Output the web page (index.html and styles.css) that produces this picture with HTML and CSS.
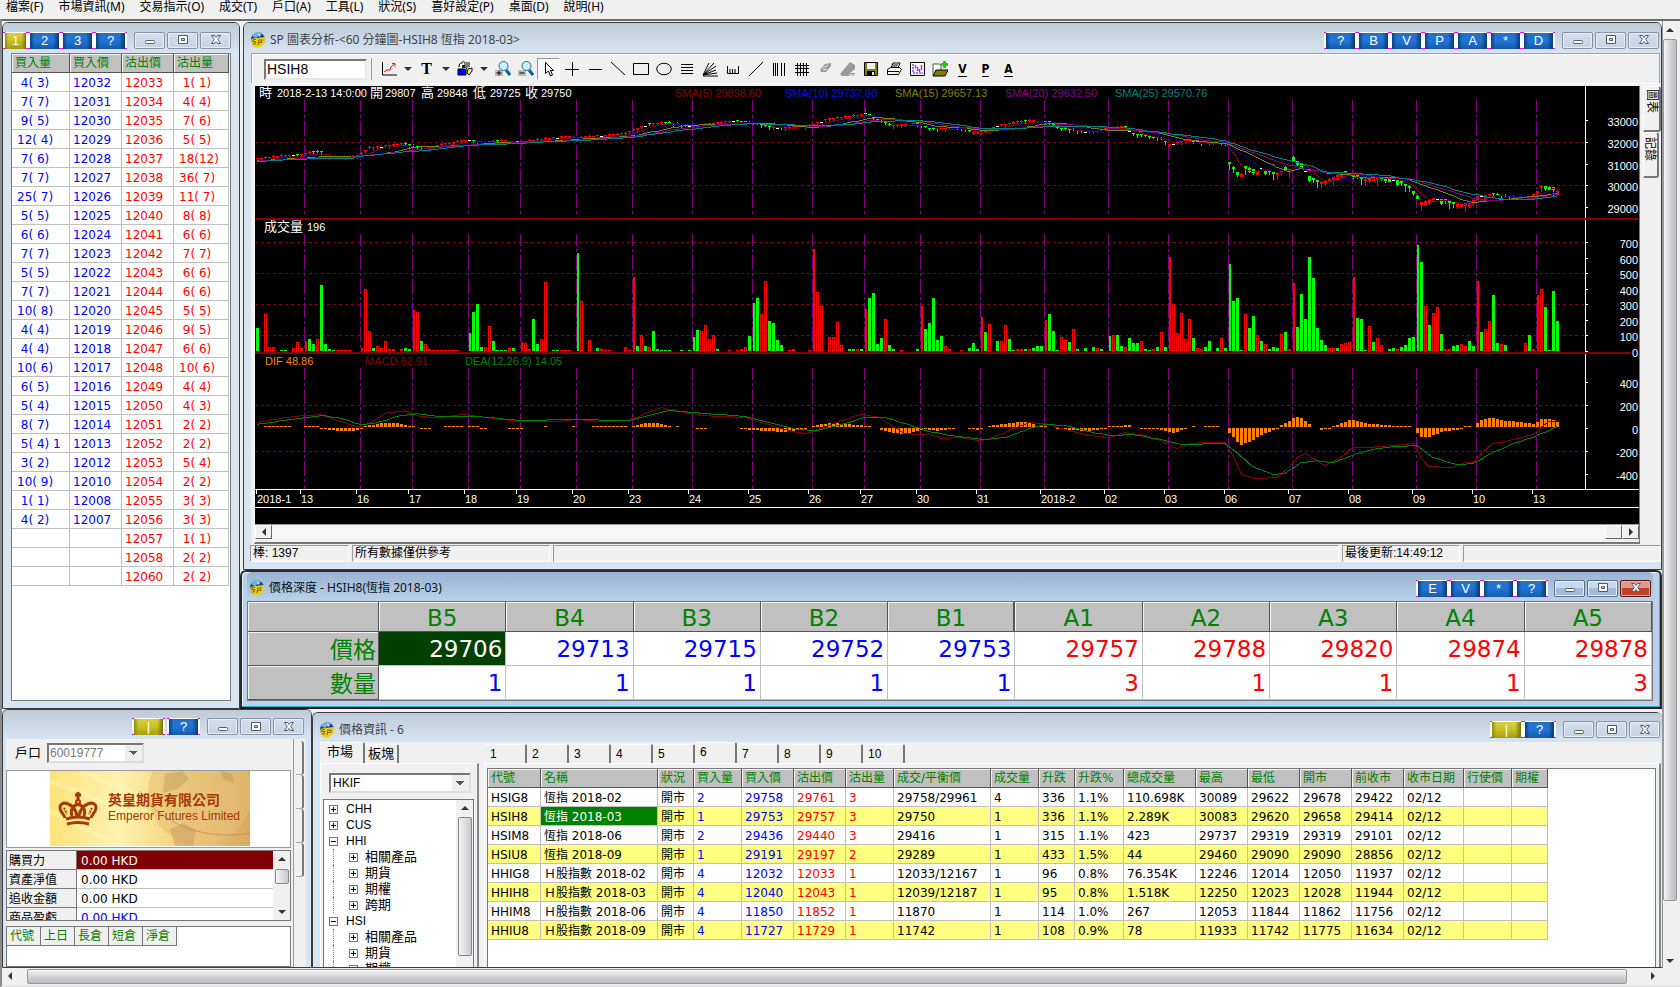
FILE: index.html
```html
<!DOCTYPE html>
<html lang="zh-Hant">
<head>
<meta charset="utf-8">
<title>SP Trader</title>
<link rel="stylesheet" href="styles.css">
</head>
<body>
<svg class="sprite" aria-hidden="true">
  <symbol id="i-sp" viewBox="0 0 16 16"><circle cx="8" cy="7.500" r="7" fill="#17479b"/><path d="M2 4a7 7 0 0 1 10-3L6 6z" fill="#6fb0dc"/><path d="M8 1l3 2-2 2z" fill="#d8ecf8"/><path d="M1 9c0-2 2-3 6-3l8-1c1 3 0 6-2 8-3 3-7 3-9 2z" fill="#e8cf1a"/><path d="M6 7.500H3.500L3 9.500h2.500L5 12H2.500M8 13l1-5h3l-.5 2.500H9" fill="none" stroke="#8a6d00" stroke-width="1.200"/></symbol>
  <symbol id="c-min" viewBox="0 0 14 14"><rect x="2.500" y="7.500" width="9" height="3" rx="1" fill="#fff" stroke="#555a66"/></symbol>
  <symbol id="c-max" viewBox="0 0 14 14"><path d="M2.500 2.500h9v8h-9zM5.500 5.500h3v2h-3z" fill="#fff" fill-rule="evenodd" stroke="#555a66"/></symbol>
  <symbol id="c-x" viewBox="0 0 14 14"><path d="M2.500 2.500h3L7 4.500l1.500-2h3L8.700 6.500l2.800 4h-3L7 8.500l-1.500 2h-3l2.800-4z" fill="#fff" stroke="#555a66"/></symbol>
  <symbol id="t-chart" viewBox="0 0 16 16"><path d="M1.500 1v13H16" fill="none" stroke="#000"/><path d="M3 11l3-2h3l1-3 3-3M11 2.500h3v3" fill="none" stroke="#f00"/></symbol>
  <symbol id="t-tools" viewBox="0 0 16 16"><path d="M1 8h8v6H1z" fill="#00f" stroke="#000"/><path d="M2 6c0-3 1-4 3-4 0-2 3-2 3 0v5M10 1v6l-2 2M12 1v5M11 8l4-1v3l-3 4-2-2z" fill="#fff" stroke="#000"/><path d="M5 4h3v3H5z" fill="#222"/><path d="M11 9h2v3h-2z" fill="#ee0"/></symbol>
  <symbol id="t-zin" viewBox="0 0 16 16"><path d="M0 9h8v6H0z" fill="#bbb"/><path d="M1.500 12h5M4 9.500v5" stroke="#000"/><path d="M11 9l4 5" stroke="#069" stroke-width="3"/><circle cx="8.500" cy="5" r="4.500" fill="#cdeefc" stroke="#1d6e9c"/></symbol>
  <symbol id="t-zout" viewBox="0 0 16 16"><path d="M0 9h8v6H0z" fill="#bbb"/><path d="M1.500 12h5" stroke="#000"/><path d="M11 9l4 5" stroke="#069" stroke-width="3"/><circle cx="8.500" cy="5" r="4.500" fill="#cdeefc" stroke="#1d6e9c"/></symbol>
  <symbol id="t-arrow" viewBox="0 0 16 16"><path d="M4.500 1.500v11l3-2.500 2 5 2-1-2-4.500h3z" fill="#fff" stroke="#000"/></symbol>
  <symbol id="t-plus" viewBox="0 0 16 16"><path d="M1 8.500h14M8.500 1v14" stroke="#000"/></symbol>
  <symbol id="t-minus" viewBox="0 0 16 16"><path d="M2 8.500h13" stroke="#000"/></symbol>
  <symbol id="t-back" viewBox="0 0 16 16"><path d="M1 1l14 13" stroke="#000"/></symbol>
  <symbol id="t-rect" viewBox="0 0 16 16"><path d="M.500 2.500h15v11H.500z" fill="none" stroke="#000"/></symbol>
  <symbol id="t-oval" viewBox="0 0 16 16"><ellipse cx="8" cy="8" rx="7.300" ry="5.800" fill="none" stroke="#000"/></symbol>
  <symbol id="t-lines" viewBox="0 0 16 16"><path d="M2 3.500h12M2 6.500h12M2 9.500h12M2 12.500h12" stroke="#000"/></symbol>
  <symbol id="t-fan" viewBox="0 0 16 16"><path d="M1 15h15M1 14L7 2M1 14L12 2M1 14l13-9M1 14l13-5M1 14l14-2" fill="none" stroke="#000"/></symbol>
  <symbol id="t-comb" viewBox="0 0 16 16"><path d="M2.500 5v7.500h11V5M5 8v4M7.500 8v4M10 8v4" fill="none" stroke="#000"/></symbol>
  <symbol id="t-slash" viewBox="0 0 16 16"><path d="M1 15L15 1" stroke="#000"/></symbol>
  <symbol id="t-vert" viewBox="0 0 16 16"><path d="M2.500 2v13M4.500 2v13M6.500 2v13M10.500 2v13M13.500 2v13" stroke="#000"/></symbol>
  <symbol id="t-grid" viewBox="0 0 16 16"><path d="M3.500 2v13M6.500 2v13M9.500 2v13M12.500 2v13M1 4.500h14M1 7.500h14M1 11.500h14" stroke="#000"/></symbol>
  <symbol id="t-er1" viewBox="0 0 16 16"><path d="M3 9l5-6 6-1v3L9 11H4z" fill="#999"/><path d="M6 7l5-3M6 9l4-1" stroke="#eee"/></symbol>
  <symbol id="t-er2" viewBox="0 0 16 16"><path d="M0 13l10-12 5 3v4l-5 4h5v3H2z" fill="#999"/><path d="M9 14h7" stroke="#fff"/></symbol>
  <symbol id="t-save" viewBox="0 0 16 16"><path d="M1.500 1.500h13v13h-13z" fill="#808000" stroke="#000"/><path d="M4 2h8v6H4z" fill="#f0f0f0"/><path d="M4 10h8v5H4z" fill="#000"/><path d="M9 11h2v3H9z" fill="#f0f0f0"/></symbol>
  <symbol id="t-print" viewBox="0 0 16 16"><path d="M5 7l2-5h7l-2 5M1.500 8.500l3-2h9l2 2-3 5h-11z" fill="#fff" stroke="#000"/><path d="M2 10.500h11M7 4h5M6 6h5" stroke="#000"/><path d="M9 12h3" stroke="#dd0"/></symbol>
  <symbol id="t-ind" viewBox="0 0 16 16"><path d="M1.500 1.500h14v13h-14z" fill="#fff" stroke="#000"/><path d="M4 3v9h10" fill="none" stroke="#00f" stroke-dasharray="2 1"/><path d="M6.500 4v3M8.500 6v4M10.500 8v3M12.500 4v5" stroke="#f0f" stroke-width="1.500"/></symbol>
  <symbol id="t-open" viewBox="0 0 16 16"><path d="M1 5V3h7l1 2v9H1z" fill="#fff" stroke="#555"/><path d="M1 15l3-6h12l-3 6z" fill="#808000" stroke="#000"/><path d="M12.500 0v7M9 3.500h7" stroke="#0d0" stroke-width="3"/></symbol>
</svg>

<nav class="menubar">
  <a href="#">檔案(F)</a><a href="#">市場資訊(M)</a><a href="#">交易指示(O)</a><a href="#">成交(T)</a><a href="#">戶口(A)</a><a href="#">工具(L)</a><a href="#">狀況(S)</a><a href="#">喜好設定(P)</a><a href="#">桌面(D)</a><a href="#">說明(H)</a>
</nav>

<div class="workspace">
  <main class="desk">
    <div class="row-top">
      <section class="win win-book">
        <header class="title" data-badges="1y 2 3 ?"></header>
        <div class="sheet book-sheet">
          <table class="grid book">
            <thead><tr><th>買入量</th><th>買入價</th><th>沽出價</th><th>沽出量</th></tr></thead>
            <tbody id="book"></tbody>
          </table>
        </div>
      </section>

      <div class="column">
        <section class="win win-chart">
          <header class="title" data-badges="? B V P A * D"><svg class="logo"><use href="#i-sp"/></svg><h2>SP 圖表分析-&lt;60 分鐘圖-HSIH8 恆指 2018-03&gt;</h2></header>
          <div class="toolbar"><input class="symbol" aria-label="Symbol" value="HSIH8"><div class="tools" id="tools"></div></div>
          <div class="chart-row">
            <div class="chart-frame">
              <svg id="chart" class="chart" viewBox="0 0 1384 438"></svg>
              <div class="classic-scroll"><button type="button" aria-label="left"><i class="left"></i></button><span class="track"></span><span class="thumb"></span><button type="button" aria-label="right"><i class="right"></i></button></div>
            </div>
            <div class="side-tabs"><button type="button" class="on">圖表</button><button type="button">記錄</button></div>
          </div>
          <footer class="status"><span class="s1">棒: 1397</span><span class="s2">所有數據僅供參考</span><span class="s3"></span><span class="s4">最後更新:14:49:12</span><span class="s5"></span></footer>
        </section>

        <section class="win win-depth active">
          <header class="title" data-badges="E V * ?"><svg class="logo"><use href="#i-sp"/></svg><h2>價格深度 - HSIH8(恆指 2018-03)</h2></header>
          <table class="depth">
            <thead><tr><th></th><th>B5</th><th>B4</th><th>B3</th><th>B2</th><th class="mid">B1</th><th>A1</th><th>A2</th><th>A3</th><th>A4</th><th>A5</th></tr></thead>
            <tbody>
              <tr><th>價格</th><td class="pick">29706</td><td>29713</td><td>29715</td><td>29752</td><td>29753</td><td class="ask">29757</td><td class="ask">29788</td><td class="ask">29820</td><td class="ask">29874</td><td class="ask">29878</td></tr>
              <tr><th>數量</th><td>1</td><td>1</td><td>1</td><td>1</td><td>1</td><td class="ask">3</td><td class="ask">1</td><td class="ask">1</td><td class="ask">1</td><td class="ask">3</td></tr>
            </tbody>
          </table>
        </section>
      </div>
    </div>

    <div class="row-bottom">
      <section class="win win-account">
        <header class="title" data-badges="|y ?"></header>
        <div class="account">
          <div class="account-main">
            <div class="field"><label for="acc">戶口</label><select id="acc" disabled><option>60019777</option></select></div>
            <div class="brand">
              <div class="banner">
                <svg class="banner-art" viewBox="0 0 200 75">
                  <defs><linearGradient id="g" x2="1"><stop offset="0" stop-color="#ffe27a"/><stop offset=".350" stop-color="#fff3b0"/><stop offset=".600" stop-color="#f5d880"/><stop offset="1" stop-color="#d8a860"/></linearGradient></defs>
                  <path d="M0 0h200v75H0z" fill="url(#g)"/>
                  <circle cx="150" cy="22" r="52" fill="#e6bf78" opacity=".550"/>
                  <path d="M115 3l18-3 6 8-12 10-14 4zM170 0l12 2 2 9-10-2zM120 58l14-6 12 8-3 15h-18z" fill="#c49a62" opacity=".500"/>
                  <path d="M90 20c20 35 70 50 110 42" fill="none" stroke="#c07850" opacity=".600"/>
                  <path d="M0 10l80 30M0 40l60 30M30 0l70 30" stroke="#fff6c0" stroke-width="5" opacity=".400"/>
                  <g fill="none" stroke="#a53a05" stroke-width="2"><path d="M28 21v8M25 24h6" stroke-width="3"/><circle cx="28" cy="31" r="2"/><path d="M27 45c-2-13-17-17-17-8 0 4 4 6 5 10M29 45c2-13 17-17 17-8 0 4-4 6-5 10M28 33c-6 2-8 7-6 12M28 33c6 2 8 7 6 12" stroke-width="3"/><path d="M14 37l3 6M42 37l-3 6" stroke-dasharray="2 1"/><path d="M16 48q12-4 24 0M17 53q11-3 22 0" stroke-width="3"/></g>
                </svg>
                <p class="brand-zh">英皇期貨有限公司</p><p class="brand-en">Emperor Futures Limited</p>
              </div>
            </div>
            <div class="funds">
              <table class="fund"><tbody>
                <tr class="hot"><th>購買力</th><td>0.00 HKD</td></tr><tr><th>資產淨值</th><td>0.00 HKD</td></tr><tr><th>追收金額</th><td>0.00 HKD</td></tr><tr class="bl"><th>商品盈虧</th><td>0.00 HKD</td></tr>
              </tbody></table>
              <div class="vbar"><i class="up"></i><b class="short"></b><i class="down"></i></div>
            </div>
            <div class="positions"><table class="pos"><thead><tr><th>代號</th><th>上日</th><th>長倉</th><th>短倉</th><th>淨倉</th></tr></thead></table></div>
          </div>
          <div class="account-side"><i></i><i></i><i></i><i></i></div>
        </div>
      </section>

      <section class="win win-info">
        <header class="title" data-badges="|y ?"><svg class="logo"><use href="#i-sp"/></svg><h2>價格資訊 - 6</h2></header>
        <div class="info">
          <div class="market">
            <div class="tabs"><button type="button" class="on">市場</button><button type="button">板塊</button></div>
            <div class="pane">
              <select class="market-select" aria-label="市場"><option>HKIF</option></select>
              <div class="tree-box"><ul class="tree" id="tree"></ul><div class="vbar"><i class="up"></i><b class="long"></b></div></div>
            </div>
          </div>
          <div class="quotes">
            <div class="tabs num" id="pages"></div>
            <div class="pane"><div class="sheet quote-sheet"><table class="grid quote"><thead id="qh"></thead><tbody id="qb"></tbody></table></div></div>
          </div>
        </div>
      </section>
    </div>
  </main>
  <div class="vscroll"><i class="up"></i><b></b><i class="down"></i></div>
</div>
<div class="hscroll"><i class="left"></i><b></b><i class="right"></i></div>
<script src="app.js"></script>
</body>
</html>
```
FILE: app.js
```js
const $ = (id) => document.getElementById(id);

/* Title bar buttons */
document.querySelectorAll('.title').forEach((bar) => {
  const badges = bar.dataset.badges.split(' ').map((b) => {
    const gold = b.endsWith('y');
    return `<button type="button" class="badge${gold ? ' gold' : ''}"><span>${gold ? b[0] : b}</span></button>`;
  }).join('');
  const ctrl = ['min', 'max', 'x'].map((c) =>
    `<button type="button" class="ctrl ctrl-${c}" aria-label="${c}"><svg><use href="#c-${c}"/></svg></button>`).join('');
  bar.insertAdjacentHTML('beforeend', `<div class="badges">${badges}</div><div class="ctrls">${ctrl}</div>`);
});

/* Chart toolbar */
const tools = ['chart', 'v', '=T', 'v', 'tools', 'v', 'zin', 'zout', 'arrow', 'plus', 'minus', 'back', 'rect', 'oval', 'lines', 'fan',
  'comb', 'slash', 'vert', 'grid', 'er1', 'er2', 'save', 'print', 'ind', 'open', '_V', '_P', '_A'];
$('tools').innerHTML = tools.map((t) => {
  if (t === 'v') return '<button type="button" class="drop" aria-label="more"><i class="down"></i></button>';
  if (t[0] === '=') return `<button type="button" class="tool serif">${t[1]}</button>`;
  if (t[0] === '_') return `<button type="button" class="tool under"><span>${t[1]}</span></button>`;
  return `<button type="button" class="tool${t === 'arrow' ? ' pressed' : ''}" aria-label="${t}"><svg><use href="#t-${t}"/></svg></button>`;
}).join('');

/* Order book */
const bids = [[4, 3], [7, 7], [9, 5], [12, 4], [7, 6], [7, 7], [25, 7], [5, 5], [6, 6], [7, 7], [5, 5], [7, 7], [10, 8], [4, 4], [4, 4], [10, 6],
  [6, 5], [5, 4], [8, 7], [5, 4, ' 1'], [3, 2], [10, 9], [1, 1], [4, 2]];
const bidPrices = [12032, 12031, 12030, 12029, 12028, 12027, 12026, 12025, 12024, 12023, 12022, 12021, 12020, 12019, 12018, 12017,
  12016, 12015, 12014, 12013, 12012, 12010, 12008, 12007];
const asks = [[1, 1], [4, 4], [7, 6], [5, 5], [18, 12], [36, 7], [11, 7], [8, 8], [6, 6], [7, 7], [6, 6], [6, 6], [5, 5], [9, 5], [6, 6], [10, 6],
  [4, 4], [4, 3], [2, 2], [2, 2], [5, 4], [2, 2], [3, 3], [3, 3], [1, 1], [2, 2], [2, 2]];
const pad = (n) => (n < 10 ? ' ' : '') + n;
const lot = (q) => (q ? `${pad(q[0])}(${pad(q[1])})${q[2] || ''}` : '');
$('book').innerHTML = asks.map((a, i) => {
  const price = i < 26 ? 12033 + i : 12060;
  return `<tr><td class="bid">${lot(bids[i])}</td><td class="bid">${bidPrices[i] || ''}</td><td class="ask">${price}</td><td class="ask">${lot(a)}</td></tr>`;
}).join('');

/* Quotes */
const cols = ['代號', '名稱', '狀況', '買入量', '買入價', '沽出價', '沽出量', '成交/平衡價', '成交量', '升跌', '升跌%', '總成交量', '最高', '最低', '開市', '前收市', '收市日期', '行使價', '期權'];
const quotes = [
  'HSIG8|恆指 2018-02|開市|2|29758|29761|3|29758/29961|4|336|1.1%|110.698K|30089|29622|29678|29422',
  'HSIH8|恆指 2018-03|開市|1|29753|29757|3|29750|1|336|1.1%|2.289K|30083|29620|29658|29414',
  'HSIM8|恆指 2018-06|開市|2|29436|29440|3|29416|1|315|1.1%|423|29737|29319|29319|29101',
  'HSIU8|恆指 2018-09|開市|1|29191|29197|2|29289|1|433|1.5%|44|29460|29090|29090|28856',
  'HHIG8|Ｈ股指數 2018-02|開市|4|12032|12033|1|12033/12167|1|96|0.8%|76.354K|12246|12014|12050|11937',
  'HHIH8|Ｈ股指數 2018-03|開市|4|12040|12043|1|12039/12187|1|95|0.8%|1.518K|12250|12023|12028|11944',
  'HHIM8|Ｈ股指數 2018-06|開市|4|11850|11852|1|11870|1|114|1.0%|267|12053|11844|11862|11756',
  'HHIU8|Ｈ股指數 2018-09|開市|4|11727|11729|1|11742|1|108|0.9%|78|11933|11742|11775|11634'];
$('qh').innerHTML = `<tr>${cols.map((c) => `<th>${c}</th>`).join('')}</tr>`;
$('qb').innerHTML = quotes.map((q, r) => {
  const cells = [...q.split('|'), '02/12', '', ''];
  return `<tr>${cells.map((c, i) => {
    const k = i === 3 || i === 4 ? 'bid' : i === 5 || i === 6 ? 'ask' : r === 1 && i === 1 ? 'sel' : '';
    return `<td class="${k}">${c}</td>`;
  }).join('')}</tr>`;
}).join('');
$('pages').innerHTML = [1, 2, 3, 4, 5, 6, 7, 8, 9, 10].map((n) => `<button type="button"${n === 6 ? ' class="on"' : ''}>${n}</button>`).join('');

/* Market tree */
const tree = [['+', 'CHH'], ['+', 'CUS'], ['-', 'HHI'], ['+', '相關產品', 1], ['+', '期貨', 1], ['+', '期權', 1], ['+', '跨期', 1], ['-', 'HSI'], ['+', '相關產品', 1], ['+', '期貨', 1], ['+', '期權', 1]];
$('tree').innerHTML = tree.map(([s, t, d]) => `<li class="${d ? 'child' : ''}"><i class="box ${s === '+' ? 'plus' : ''}"></i><span>${t}</span></li>`).join('');

/* Chart: three panels on a shared 4px bar pitch */
const starts = [12, 26, 39, 53, 66, 80, 94, 109, 124, 139, 152, 166, 181, 197, 213, 228, 243, 259, 274, 290, 305, 320];
const days = ['13', '16', '17', '18', '19', '20', '23', '24', '25', '26', '27', '30', '31', '2018-2', '02', '03', '06', '07', '08', '09', '10', '13'];
const out = [];
const line = (x1, y1, x2, y2, c, dash = '', w = 1) => out.push(`<path d="M${x1} ${y1}L${x2} ${y2}" stroke="${c}" stroke-width="${w}"${dash ? ` stroke-dasharray="${dash}"` : ''}/>`);
const rect = (x, y, w, h, c) => out.push(`<rect x="${x}" y="${y}" width="${w}" height="${h}" fill="${c}"/>`);
const text = (x, y, t, c = '#fff', a = 'start') => out.push(`<text x="${x}" y="${y}" fill="${c}" text-anchor="${a}"${/[\u4e00-\u9fff]/.test(t) ? ' class="zh"' : ''}>${t}</text>`);
const frames = (pts) => {
  const v = [];
  for (let k = 0; k < pts.length - 2; k += 2) {
    const [a, ya, b, yb] = pts.slice(k, k + 4);
    for (let i = a; i <= b; i++) v[i] = ya + (yb - ya) * (i - a) / (b - a || 1);
  }
  return v;
};
const poly = (v, c) => out.push(`<polyline fill="none" stroke="${c}" points="${v.map((y, i) => `${4 * i + 2},${Math.round(y) + 0.5}`).join(' ')}"/>`);

[56, 99, 156, 187, 218, 249, 319, 365].forEach((y) => line(0, y + 0.5, 1330, y + 0.5, '#800000', '3 3'));
starts.forEach((i) => [[14, 131], [148, 265], [282, 403]].forEach(([a, b]) => line(4 * i + 1.5, a, 4 * i + 1.5, b, '#800080', '12 3 3 3 3 0')));

/* Price */
const price = frames([0, 73, 6, 70, 11, 69, 14, 66, 16, 66, 17, 71, 25, 71, 26, 68, 28, 62, 32, 60, 37, 58, 39, 60, 43, 62, 46, 59, 53, 54, 56, 57, 60, 55, 66, 56,
  72, 53, 77, 51, 80, 52, 86, 50, 92, 48, 94, 44, 98, 38, 103, 37, 107, 39, 109, 40, 115, 37, 120, 35, 124, 37, 129, 42, 137, 41, 139, 39, 142, 34, 147, 31,
  150, 30, 152, 27, 155, 34, 159, 40, 165, 38, 168, 43, 176, 42, 179, 47, 182, 46, 185, 40, 192, 35, 198, 36, 200, 42, 208, 46, 214, 42, 217, 41, 219, 48,
  226, 53, 228, 59, 232, 55, 237, 57, 242, 57, 243, 77, 245, 87, 246, 89, 247, 81, 250, 86, 251, 82, 255, 88, 257, 82, 258, 84, 259, 72, 261, 79, 263, 91,
  266, 97, 269, 92, 272, 86, 275, 89, 277, 94, 281, 91, 286, 96, 288, 101, 290, 111, 291, 117, 294, 113, 297, 114, 300, 119, 303, 118, 305, 111, 309, 108,
  313, 111, 318, 111, 320, 106, 321, 101, 324, 102, 325, 106]);
price.forEach((y, i) => {
  const late = i > 242 && (i < 308 || i > 319);
  const h = (i * 37) % 11;
  const next = price[Math.min(i + 1, 325)];
  const c = h === 3 ? '#fff' : (next - y > 0.4 || (next - y > -0.3 && h % 2)) ? '#0f0' : '#f00';
  const yy = Math.round(y);
  if (c === '#fff') { rect(4 * i + 1, yy, 3, 1, c); return; }
  const body = late ? 2 + h % 4 : 1;
  const wick = late ? 4 + h % 5 : 3;
  rect(4 * i + 2, yy - (h % 3), 1, wick, c);
  rect(4 * i + 1, yy - 1, 3, body, c);
});
rect(4 * 152 + 2, 22, 1, 7, '#f00');
const sma = (n) => price.map((_, i) => {
  const s = price.slice(Math.max(0, i - n + 1), i + 1);
  return s.reduce((a, b) => a + b, 0) / s.length + (i < 25 ? n / 12 : 0);
});
[[5, '#800000'], [10, '#000080'], [15, '#808000'], [20, '#800080'], [25, '#008080']].forEach(([n, c]) => poly(sma(n), c));

/* Volume: bar index, colour, top edge in thirds of a pixel */
const vol = `0g357 2r313 3r412 4r412 6g423 7g423 9r415 10r397 11r415 12r394 13g388 14g403 15r388 16g228 17g403 18g420 19g423 20r423 21r423 22r423 23r423
26r415 27r238 28r364 29g415 30r409 31r415 32r394 33r418 34r420 36r418 37g415 38g420 39r301 40r307 41g394 42r403 43r420 44r421 45r421 46r423 47r423 48r423 49r423 50r421
53g370 54g307 55g283 56g412 57r412 58r349 59g394 60g423 61g423 62g423 63r415 64g415 66r397 67r400 68r420 69g328 70g403 71r388 72r217 74g423 75g423 76r423 77r423 78r423
80g132 81r274 83r391 85g415 86r420 87r423 88r423 92r412 93r423 94r202 95g409 96r376 97g409 98r412 99g364 100g418 101g423 102g423 103g423 106g423 108g423
109g382 110g361 111r364 112r346 113r388 114r376 115g420 118r423 120r423 121r418 122r412 123g379 124g280 125g265 126r313 127r214 128g334 129g340 130g391 131g406 133r423 134r418 138r423
139r118 140r247 141r289 143r382 144r382 145r337 146r406 148g420 149g420 150r418 151g420 152r298 153g265 154g250 155g403 156g385 157r328 158g406 159g418 161r423 165g420
166r289 167g358 168g340 169g265 170g391 171g379 172r409 173r418 176r423 178g415 179g400 180g420 181r322 182g367 183r343 185g394 186r394 187r346 188g388 189g423 190r418 191r418 192g420 193r418 194g415 195g409 196g409
197r331 198g313 199g364 200g423 201r382 202r391 203g397 204r358 205g418 207g415 209g412 210r415 211g418 213g379 214r376 215g376 216g409 217r412 218g385 219g400 220g400 221r394 222g418 223g423 224r420 225g412 226r367 227g412
228r142 229r283 230r370 231r310 232r388 233r328 234g385 235r415 236r418 237g412 238g394 240g415 241r385 242g415 243g163 244g274 245g265 246g423 247r313 248g355 249g319 250r376 251g394 252r403 253g418 254g412 255g415 256r373 257g367 258r418
259r220 260g352 261g253 262g328 263g142 264g205 265g355 266g391 267g406 268r415 269r415 270g415 271r403 272r400 273r397 274r202 275g325 276g328 277g423 278r349 279g397 280r385 281r406 283g418 284g415 285r420 286g412 287g406 288g385 289g382
290g106 291g157 292r289 293g346 294r310 295r292 296g373 297r418 298r420 299g409 300g406 301r403 302r409 303g394 304g409 305r214 306g367 307r358 308r334 309g256 310g400 311r403 312g406 317r400 318g376 319r418 320r256 321r238 322g292 323g423 324g244 325g334`;
vol.split(/\s+/).forEach((s) => {
  const [, i, c, t] = s.match(/(\d+)([gr])(\d+)/);
  const h = Math.max(1, Math.round((425 - t) / 3));
  const x = 4 * i + 1;
  const first = starts.includes(+i);
  if (c === 'g') rect(first ? x + 1 : x, 265 - h, first ? 2 : 3, h, '#0f0');
  else if (h < 3) rect(x, 265 - h, 3, h, '#f00');
  else out.push(`<path d="M${x + (first ? 1.5 : 0.5)} 265V${265.5 - h}h${first ? 1 : 2}V264.500z" fill="${first ? 'none' : '#000'}" stroke="#f00"/>`);
});

/* MACD */
const hist = frames([2, 1, 8, 1, 9, 0, 11, 0, 12, 1, 15, 1, 16, -1, 18, -2, 20, -3, 24, -3, 26, -1, 27, 1, 29, 2, 31, 4, 34, 4, 36, 3, 38, 1, 40, 0, 41, -1, 43, -1, 44, 0,
  46, 0, 47, 1, 51, 1, 52, 0, 53, 1, 55, 1, 56, -1, 57, -1, 58, 0, 62, 0, 63, -1, 66, -1, 67, 0, 71, 0, 72, 1, 73, 0, 78, 0, 79, 1, 80, 0, 83, 0, 84, 1, 92, 1, 93, 0, 94, 1,
  96, 3, 98, 4, 100, 4, 101, 3, 103, 1, 104, 0, 105, 1, 106, 0, 109, 0, 110, -1, 112, -1, 113, 0, 120, 0, 121, -1, 123, -2, 127, -3, 131, -4, 134, -3, 137, -1, 138, 0, 139, 1,
  141, 3, 144, 4, 147, 3, 149, 2, 153, 1, 154, 0, 155, 0, 156, -2, 158, -4, 161, -6, 163, -5, 165, -3, 166, -2, 167, -1, 170, -3, 172, -2, 174, -1, 175, 0, 177, 0, 178, -1,
  180, -2, 181, -1, 183, 1, 185, 2, 188, 4, 191, 5, 193, 4, 195, 1, 197, 1, 198, 0, 199, 0, 200, -1, 203, -2, 208, -3, 212, -1, 213, 1, 215, 1, 218, 2, 219, 0, 220, 0, 221, -1,
  224, -1, 226, -2, 229, -5, 230, -4, 232, -1, 233, 0, 234, 1, 235, 0, 236, 0, 237, 1, 240, 1, 241, 0, 242, 0, 243, -5, 245, -14, 246, -17, 249, -12, 251, -7, 253, -4, 255, -1,
  256, 2, 258, 6, 259, 9, 260, 10, 261, 9, 262, 6, 263, 3, 264, 0, 265, 0, 266, -2, 268, -1, 269, 1, 270, 2, 272, 5, 273, 7, 274, 7, 276, 5, 278, 3, 282, 2, 284, 1, 288, 1,
  289, 0, 290, -5, 291, -9, 293, -9, 295, -6, 297, -3, 300, -2, 301, -1, 302, 1, 303, 1, 304, 0, 305, 4, 306, 7, 308, 9, 310, 8, 312, 6, 316, 5, 319, 3, 320, 5, 321, 8,
  323, 8, 324, 7, 325, 5]);
hist.forEach((v, i) => {
  const h = Math.round(v);
  if (h > 0) rect(4 * i + 1, 341 - h, 3, h, '#ff8000');
  if (h < 0) rect(4 * i + 1, 342, 3, -h, '#ff8000');
});
poly(frames([0, 336, 9, 330, 16, 328, 20, 334, 26, 341, 29, 335, 32, 327, 37, 324, 41, 330, 45, 331, 52, 328, 58, 331, 66, 335, 75, 335, 80, 333, 86, 335, 93, 334, 97, 327,
  101, 321, 105, 324, 111, 329, 122, 331, 127, 337, 133, 344, 137, 347, 141, 342, 146, 334, 151, 328, 155, 330, 158, 337, 162, 347, 166, 348, 168, 347, 171, 352, 176, 351,
  180, 354, 183, 353, 188, 344, 193, 336, 197, 337, 203, 344, 208, 349, 213, 351, 217, 346, 221, 348, 226, 354, 230, 362, 233, 357, 237, 356, 242, 356, 244, 369, 246, 387,
  249, 392, 255, 391, 258, 381, 260, 371, 262, 367, 265, 374, 267, 379, 271, 371, 274, 361, 278, 361, 284, 359, 289, 357, 291, 371, 293, 380, 299, 381, 302, 376, 304, 376,
  306, 367, 309, 357, 312, 355, 316, 351, 319, 348, 321, 341, 323, 335, 325, 334]), '#800000');
poly(frames([0, 338, 8, 333, 17, 329, 21, 332, 26, 338, 30, 336, 36, 329, 40, 327, 46, 330, 55, 330, 66, 334, 79, 333, 93, 334, 99, 328, 103, 324, 109, 326, 122, 330, 130, 338,
  135, 343, 140, 344, 147, 337, 152, 331, 157, 331, 162, 337, 168, 345, 175, 350, 182, 353, 187, 351, 193, 342, 197, 338, 202, 339, 208, 345, 213, 349, 219, 348, 226, 353,
  231, 358, 242, 357, 245, 366, 249, 380, 254, 388, 257, 387, 261, 376, 265, 374, 269, 376, 272, 372, 275, 367, 280, 362, 285, 360, 290, 359, 294, 371, 300, 378, 304, 377,
  308, 368, 314, 357, 319, 351, 325, 340]), '#008000');

/* Axes and labels */
line(1330.5, 0, 1330.5, 404, '#fff');
line(0, 133, 1384, 133, '#800000', '', 2);
line(0, 267, 1376, 267, '#800000', '', 2);
line(0, 403.5, 1384, 403.5, '#fff');
line(0, 421.5, 1384, 421.5, '#fff');
const axis = (y0, step, labels, off) => labels.forEach((t, k) => {
  const y = Math.round(y0 + k * step);
  line(1331, y + 0.5, 1333, y + 0.5, '#fff');
  text(1383, y + off, t, '#fff', 'end');
});
axis(34, 21.75, ['33000', '32000', '31000', '30000', '29000'], 6);
axis(156, 15.57, ['700', '600', '500', '400', '300', '200', '100', '0'], 6);
axis(296, 23, ['400', '200', '0', '-200', '-400'], 6);
text(2, 417, '2018-1');
line(1.5, 404, 1.5, 408, '#fff');
starts.forEach((i, k) => {
  line(4 * i - 2.5, 404, 4 * i - 2.5, 408, '#fff');
  text(4 * i - 2, 417, days[k]);
});
[['時', 4], ['2018-2-13 14:0:00', 22], ['開', 115], ['29807', 130], ['高', 166], ['29848', 182], ['低', 218], ['29725', 235], ['收', 270], ['29750', 286]].forEach(([t, x]) => text(x, 11, t));
text(420, 11, 'SMA(5) 29898.60', '#800000');
text(530, 11, 'SMA(10) 29737.80', '#0000ff');
text(640, 11, 'SMA(15) 29657.13', '#808000');
text(750, 11, 'SMA(20) 29632.50', '#800080');
text(860, 11, 'SMA(25) 29570.76', '#008080');
text(9, 145, '成交量');
text(52, 145, '196');
text(10, 279, 'DIF 48.86', '#ff8000');
text(110, 279, 'MACD 62.91', '#800000');
text(210, 279, 'DEA(12,26,9) 14.05', '#008000');
$('chart').innerHTML = out.join('');
```
FILE: styles.css
```css
* { box-sizing: border-box; }
body {
  margin: 0; height: 100vh; display: flex; flex-direction: column; overflow: hidden;
  background: #f0f0f0; color: #000;
  font: 12px/16px "Liberation Sans", "Noto Sans CJK TC", sans-serif;
}
button, input, select { font: inherit; color: inherit; margin: 0; padding: 0; border: 0; border-radius: 0; background: none; }
h2, p, ul { margin: 0; padding: 0; font: inherit; }
table { border-collapse: separate; border-spacing: 0; table-layout: fixed; }
i, b { display: block; }
.sprite { position: absolute; width: 0; height: 0; }

.menubar { display: flex; gap: 15px; height: 19px; padding: 0 6px; line-height: 14px; font-family: "Noto Sans", "Noto Sans CJK TC", sans-serif; flex: none; }
.menubar a { color: #000; text-decoration: none; white-space: nowrap; }

.workspace { flex: 1; display: flex; min-height: 0; border-top: 2px solid #6c6c6c; border-left: 2px solid #8c8c8c; }
.desk { flex: 1; min-width: 0; display: flex; flex-direction: column; overflow: hidden; }
.row-top { flex: 1; display: flex; min-height: 0; }
.column { flex: 1; min-width: 0; display: flex; flex-direction: column; }
.row-bottom { display: flex; height: 259px; flex: none; }

.win { display: flex; flex-direction: column; background: #d7e4f2; border: 1px solid #3c3c3c; border-radius: 6px 6px 0 0; box-shadow: inset 0 1px #fff; min-width: 0; }
.win.active { background: #b9d1ea; border: 2px solid #2a2a2a; border-bottom-color: #111; box-shadow: inset -1px -1px #29b7cf, inset 1px 1px #e4f0fa; }
.title { display: flex; align-items: center; height: 30px; padding: 4px 2px 0 6px; flex: none; border-radius: 5px 5px 0 0; background: linear-gradient(#bdcbd9, #d7e4f2); color: #444; }
.active .title { background: linear-gradient(#99b4d1, #b9d1ea); color: #111; }
.title h2 { font: 12px/18px "Noto Sans", "Noto Sans CJK TC", sans-serif; white-space: nowrap; }
.logo { width: 16px; height: 16px; margin-right: 4px; }
.badges { display: flex; margin-left: auto; margin-right: 7px; flex: none; }
.badge { display: flex; width: 33px; height: 17px; padding: 0 2px; background: linear-gradient(#f0f 0 1px, #fff 1px 16px, #f0f 16px); }
.badge span { flex: 1; border-top: 1px solid #fff; background: linear-gradient(90deg, #0c3f7d, transparent 15% 80%, #0a3a74), linear-gradient(#2a6fc0, #1f74d8 50%, #1759a8); color: #fff; font-size: 13px; line-height: 15px; }
.badge.gold span { background: linear-gradient(90deg, #8f8a10, transparent 15% 80%, #77720a), linear-gradient(#d8d040, #c9c022 50%, #a39b15); }
.ctrls { display: flex; gap: 2px; flex: none; }
.ctrl { width: 31px; height: 17px; display: grid; place-items: center; border: 1px solid #8593ab; border-radius: 2px; background: linear-gradient(#d3dfec, #c4d3e4); box-shadow: inset 0 0 0 1px #e6eef7; }
.ctrl svg { width: 14px; height: 14px; }
.active .ctrl { background: linear-gradient(#c5d9ef 50%, #a0bcdb 50%); border-color: #5c6f8c; }
.active .ctrl-x { background: linear-gradient(#df9a8c 50%, #c04028 50%); border-color: #5b1a1a; box-shadow: inset 0 0 0 1px #e9a89c; }

.sheet { background: #fff; border: 1px solid #7a7a7a; overflow: hidden; }
.grid { font: 12px/18px "DejaVu Sans", "Noto Sans CJK TC", sans-serif; }
.grid th { height: 19px; padding: 1px 0 0 3px; background: #c0c0c0; border-right: 1px solid #555; border-bottom: 1px solid #555; box-shadow: inset 1px 1px #f4f4f4; color: #008000; font-weight: normal; line-height: 17px; text-align: left; white-space: nowrap; overflow: hidden; }
.grid td { height: 19px; padding: 2px 0 0 3px; line-height: 16px; border-right: 1px solid #c0c0c0; border-bottom: 1px solid #c0c0c0; white-space: pre; overflow: hidden; }
.bid { color: #00f; }
.ask { color: #f00; }

.win-book { width: 238px; margin-top: 1px; }
.win-book .title { padding: 4px 9px 0 0; }
.win-book .badge.gold { width: 25px; }
.book-sheet { flex: 1; margin: 0 8px 7px 8px; }
.book { width: 217px; }
.book th:nth-child(1) { width: 58px; }
.book th:nth-child(2), .book th:nth-child(3) { width: 52px; }
.book td:first-child, .book td:last-child { padding-left: 5px; }

.win-chart { flex: 1; margin: 1px 0 0 3px; }
.toolbar { display: flex; align-items: center; height: 30px; margin: 0 1px 0 7px; padding: 1px 0 0 12px; background: #f0f0f0; border: 1px solid #a0a0a0; border-bottom: 0; box-shadow: inset 1px 1px #fff; flex: none; }
.symbol { width: 103px; height: 21px; padding-left: 1px; background: #fff; border: 2px solid #777; border-right-color: #e8e8e8; border-bottom-color: #e8e8e8; font-size: 14px; }
.tools { display: flex; margin-left: 4px; padding-left: 5px; border-left: 1px solid #999; }
.tool { width: 23px; height: 22px; display: grid; place-items: center; }
.tool svg { width: 16px; height: 16px; }
.tool.pressed { background: #f8f8f8; border: 1px solid #999; border-right-color: #fff; border-bottom-color: #fff; }
.serif { font: bold 16px/20px "Liberation Serif", serif; }
.under { font: bold 12px/14px "DejaVu Sans Condensed", "DejaVu Sans", sans-serif; }
.under span { border-bottom: 1px solid #000; line-height: 14px; }
.drop { width: 15px; display: grid; place-items: center; }
.down, .up, .left, .right { width: 0; height: 0; border: 4px solid transparent; }
.down { border-top-color: #333; border-bottom: 0; }
.up { border-bottom-color: #333; border-top: 0; }
.left { border-right-color: #333; border-left: 0; }
.right { border-left-color: #333; border-right: 0; }

.chart-row { flex: 1; min-height: 0; display: flex; margin-left: 7px; padding: 2px 0 0 3px; background: #f0f0f0; border-top: 1px solid #fff; }
.chart-frame { flex: 1; min-width: 0; border-left: 1px solid #fff; border-right: 1px solid #777; border-bottom: 2px solid #777; }
.chart { display: block; width: 100%; background: #000; shape-rendering: crispEdges; font: 11px "Liberation Sans", "Noto Sans CJK TC", sans-serif; }
.chart .zh { font-size: 13px; }
.classic-scroll { display: flex; height: 15px; background: #f6f6f6; border-top: 1px solid #999; }
.classic-scroll .track { flex: 1; }
.classic-scroll button, .thumb { width: 17px; height: 14px; background: #f0f0f0; border: 1px solid #fff; border-right-color: #666; border-bottom-color: #666; }
.classic-scroll button { display: grid; place-items: center; }
.side-tabs { width: 21px; padding-left: 3px; display: flex; flex-direction: column; }
.side-tabs button { writing-mode: vertical-rl; text-orientation: sideways; width: 16px; height: 46px; padding-top: 4px; line-height: 14px; text-align: left; border: 1px solid #fff; border-right: 2px solid #777; border-bottom: 2px solid #777; border-radius: 0 3px 3px 0; }
.side-tabs .on { width: 18px; padding-top: 2px; }
.status { display: flex; gap: 3px; height: 25px; margin-left: 6px; padding: 1px 0 7px; background: linear-gradient(#f0f0f0 18px, #d7e4f2 18px); line-height: 15px; flex: none; }
.status span { padding-left: 2px; border: 1px solid #999; border-right-color: #fff; border-bottom-color: #fff; white-space: nowrap; }
.s1 { width: 99px; } .s2 { width: 198px; } .s3 { flex: 1; } .s4 { width: 118px; } .s5 { width: 198px; }

.win-depth { flex: none; padding: 0 7px 6px 5px; }
.win-depth .title { height: 29px; padding: 3px 2px 0; }
.win-depth .badges { margin-right: 6px; }
.depth { width: 100%; border: 1px solid #777; background: #fff; font: 23px/30px "DejaVu Sans", "Noto Sans CJK TC", sans-serif; }
.depth th { padding: 4px 0 0; height: 30px; line-height: 25px; background: #c0c0c0; color: #008000; font-weight: normal; border-right: 1px solid #555; border-bottom: 1px solid #555; box-shadow: inset 1px 1px #f4f4f4; }
.depth th:first-child { width: 131px; text-align: right; padding-right: 2px; }
.depth thead .mid { border-right-width: 2px; }
.depth tbody th, .depth td { height: 34px; padding-top: 2px; }
.depth tbody th { line-height: 28px; }
.depth td { padding-right: 3px; text-align: right; color: #00f; border-right: 1px solid #c0c0c0; border-bottom: 1px solid #c0c0c0; }
.depth .ask { color: #f00; }
.depth .pick { background: #004000; color: #fff; }

.win-account { width: 310px; }
.win-account .title { height: 29px; padding-right: 7px; }
.win-account .badge { margin-left: 2px; }
.account { flex: 1; min-height: 0; display: flex; margin: 0 5px 0 3px; background: #f0f0f0; }
.account-main { flex: 1; min-width: 0; display: flex; flex-direction: column; border-right: 1px solid #999; }
.account-side { width: 12px; padding: 2px 2px 0; }
.account-side i { height: 34px; border-right: 2px solid #777; border-bottom: 1px solid #aaa; border-radius: 0 3px 3px 0; }
.field { display: flex; align-items: center; gap: 6px; height: 31px; padding: 0 0 3px 9px; font-size: 13px; flex: none; }
.field select { width: 97px; height: 20px; padding: 0 1px; color: #777; font-size: 12px; }
select { appearance: none; border: 2px solid #777; border-right-color: #ddd; border-bottom-color: #ddd; background: linear-gradient(45deg, transparent 50%, #555 50%) no-repeat right 9px center / 4px 4px, linear-gradient(-45deg, transparent 50%, #555 50%) no-repeat right 5px center / 4px 4px, linear-gradient(#eee, #eee) no-repeat right / 17px 100%, #fff; opacity: 1; }
.brand { height: 78px; margin-right: 2px; padding-left: 43px; background: #fff; border: 1px solid #999; flex: none; }
.banner { position: relative; width: 200px; height: 75px; color: #a53a05; }
.banner-art { position: absolute; inset: 0; width: 200px; height: 75px; }
.brand-zh, .brand-en { position: relative; padding-left: 58px; white-space: nowrap; }
.brand-zh { padding-top: 20px; font-size: 14px; line-height: 18px; font-weight: bold; }
.brand-en { font: 12px/14px "Liberation Sans", sans-serif; }
.funds { display: flex; height: 71px; margin: 2px 2px 0 0; border: 1px solid #777; overflow: hidden; flex: none; }
.fund { flex: 1; background: #fff; }
.fund th { width: 70px; height: 19px; padding: 2px 0 0 2px; background: #f0f0f0; border-right: 1px solid #777; border-bottom: 1px solid #777; font-weight: normal; text-align: left; line-height: 16px; }
.fund td { height: 19px; padding: 2px 0 0 4px; border-bottom: 1px solid #c0c0c0; font: 12px/16px "DejaVu Sans", sans-serif; }
.fund .hot td { background: #800000; color: #fff; }
.fund .bl td { color: #00f; }
.vbar { width: 17px; padding: 6px 1px; display: flex; flex-direction: column; align-items: center; justify-content: space-between; background: #f0f0f0; }
.vbar b { width: 14px; border: 1px solid #888; border-radius: 2px; background: linear-gradient(90deg, #f4f4f4, #c8c8cc); }
.short { height: 15px; margin-bottom: 18px; }
.long { height: 139px; }
.positions { flex: 1; margin: 5px 2px 0 0; background: #fff; border: 1px solid #777; overflow: hidden; }
.pos th { width: 34px; height: 19px; padding: 1px 0 0 3px; max-width: 34px; overflow: hidden; white-space: nowrap; text-align: left; line-height: 17px; font-weight: normal; color: #008000; background: #f0f0f0; border-right: 1px solid #777; border-bottom: 1px solid #777; }

.win-info { flex: 1; margin: 3px 0 0; border-right: 0; }
.win-info .title { height: 29px; }
.info { flex: 1; min-height: 0; display: flex; gap: 5px; margin: 0 1px 0 7px; background: #f0f0f0; }
.market { width: 159px; display: flex; flex-direction: column; }
.quotes { flex: 1; min-width: 0; display: flex; flex-direction: column; }
.tabs { display: flex; align-items: flex-end; height: 21px; flex: none; font-size: 13px; }
.tabs button { height: 19px; padding: 0 3px; text-align: left; border-top: 1px solid #fff; border-right: 2px solid #777; border-radius: 2px 2px 0 0; white-space: nowrap; }
.tabs .on { height: 21px; padding: 0 10px 3px 7px; }
.tabs.num { padding-left: 1px; font-size: 12px; }
.num button { width: 42px; padding: 0 5px; }
.num .on { padding: 0 5px 3px; }
.pane { flex: 1; min-height: 0; display: flex; flex-direction: column; border-top: 1px solid #fff; border-left: 1px solid #fff; border-right: 2px solid #888; }
.market-select { width: 142px; height: 20px; margin: 9px 0 6px 8px; padding: 0 2px; flex: none; }
.tree-box { flex: 1; min-height: 0; display: flex; margin: 0 3px 0 2px; background: #fff; border: 1px solid #777; border-bottom: 0; overflow: hidden; }
.tree-box .vbar { justify-content: flex-start; gap: 7px; }
.tree { flex: 1; list-style: none; overflow: hidden; padding: 1px 0 0 5px; }
.tree li { display: flex; align-items: center; gap: 8px; height: 16px; line-height: 16px; white-space: nowrap; }
.tree .child { gap: 7px; font-size: 13px; border-left: 1px dotted #888; margin-left: 4px; padding-left: 15px; }
.box { width: 9px; height: 9px; border: 1px solid #777; background: linear-gradient(#000, #000) no-repeat center / 5px 1px; }
.box.plus { background: linear-gradient(#000, #000) no-repeat center / 5px 1px, linear-gradient(#000, #000) no-repeat center / 1px 5px; }
.quote-sheet { flex: 1; margin: 4px 3px 0 2px; border-bottom: 0; }
.quote { width: 1060px; }
.quote tbody tr:nth-child(even) { background: #ffff80; }
.quote .sel { background: #008000; color: #fff; }
.quote th:nth-child(1) { width: 53px; } .quote th:nth-child(2) { width: 117px; }
.quote th:nth-child(3), .quote th:nth-child(10), .quote th:nth-child(19) { width: 36px; }
.quote th:nth-child(4), .quote th:nth-child(7), .quote th:nth-child(9), .quote th:nth-child(18) { width: 48px; }
.quote th:nth-child(8) { width: 97px; } .quote th:nth-child(11) { width: 49px; }
.quote th:nth-child(12) { width: 72px; } .quote th:nth-child(17) { width: 60px; }

.vscroll { width: 18px; display: flex; flex-direction: column; align-items: center; padding: 7px 3px 5px 0; border-left: 1px solid #999; }
.vscroll b { flex: 1; width: 14px; margin: 7px 0 58px; border: 1px solid #999; border-radius: 2px; background: linear-gradient(90deg, #f6f6f6, #cfcfd2 60%, #bcbcc0); }
.hscroll { display: flex; align-items: center; height: 19px; padding: 0 25px 2px 6px; border-left: 2px solid #8c8c8c; border-bottom: 1px solid #ddd; flex: none; }
.hscroll b { flex: 1; height: 15px; margin: 0 24px 0 15px; border: 1px solid #999; border-radius: 2px; background: linear-gradient(#f6f6f6, #cfcfd2 60%, #bcbcc0); }
```
